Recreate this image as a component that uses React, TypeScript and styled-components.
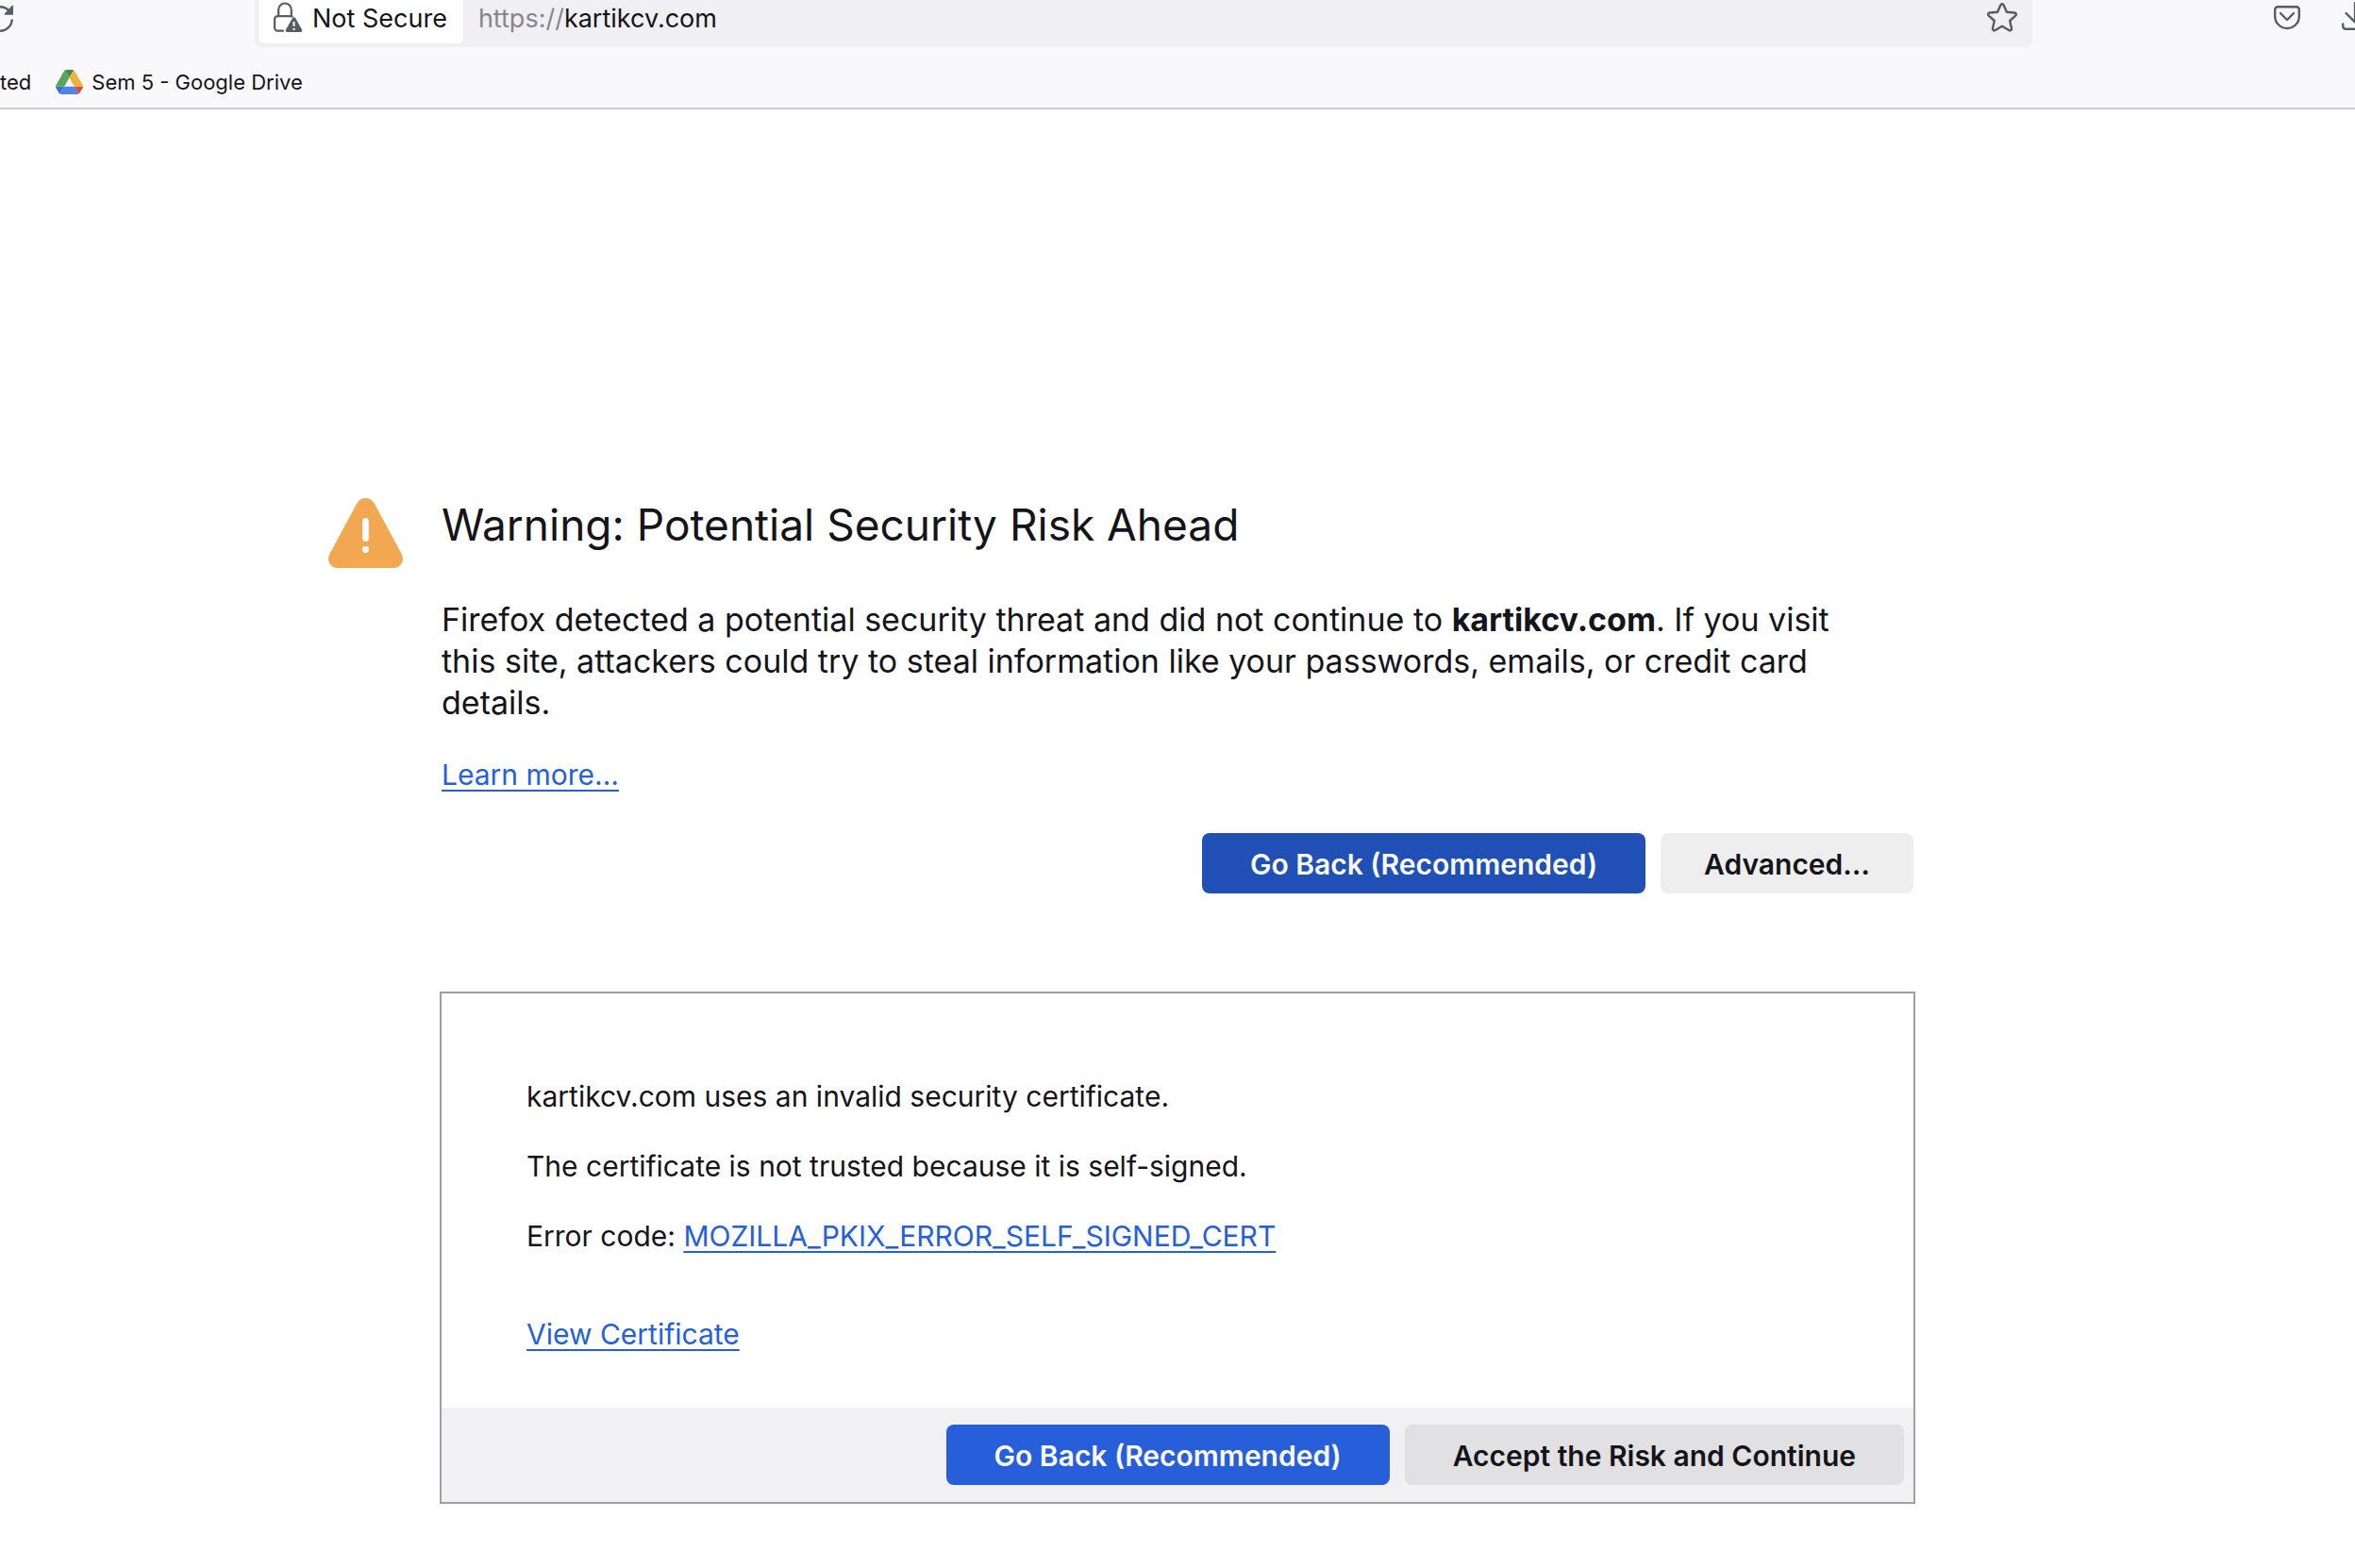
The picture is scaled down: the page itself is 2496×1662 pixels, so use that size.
import React from "react";
import styled, { createGlobalStyle } from "styled-components";

const GlobalStyle = createGlobalStyle`
  *, *::before, *::after { box-sizing: border-box; }
  body {
    margin: 0;
    background: #ffffff;
    color: #15141a;
    font-family: Inter, "Noto Sans", "Liberation Sans", sans-serif;
  }
  button, input { font: inherit; color: inherit; }
`;

const Chrome = styled.header`
  background: #f9f9fb;
  border-bottom: 2px solid #cccccc;
  overflow: hidden;
`;

const Toolbar = styled.div`
  display: flex;
  align-items: flex-start;
  height: 50px;
`;

const ToolButton = styled.button`
  display: flex;
  flex: none;
  padding: 0;
  border: 0;
  background: none;
  color: #5b5b66;
  cursor: pointer;
`;

const NavGroup = styled.div`
  flex: none;
  width: 270px;
`;

const ActionGroup = styled.div`
  display: flex;
  flex: none;
  gap: 44px;
  padding-left: 256px;
`;

const UrlBar = styled.div`
  display: flex;
  align-items: flex-start;
  flex: 1;
  min-width: 0;
  height: 50px;
  padding: 0 16px 0 4px;
  border-radius: 0 0 8px 8px;
  background: #f0f0f4;
  font-size: 27px;
  line-height: 40px;
`;

const Identity = styled.button`
  display: flex;
  align-items: flex-start;
  flex: none;
  gap: 10px;
  height: 46px;
  padding: 0 17px 0 16px;
  border: 0;
  border-radius: 0 0 6px 6px;
  background: #ffffff;
  white-space: nowrap;
  cursor: pointer;
`;

const Address = styled.label`
  display: flex;
  flex: 1;
  min-width: 0;
  padding-left: 16px;
`;

const Scheme = styled.span`
  color: #87878b;
`;

const AddressInput = styled.input`
  flex: 1;
  min-width: 0;
  height: 40px;
  padding: 0;
  border: 0;
  outline: 0;
  background: transparent;
`;

const Bookmarks = styled.nav`
  display: flex;
  align-items: center;
  gap: 26px;
  height: 64px;
  padding-top: 10px;
  font-size: 22px;
  line-height: 28px;
`;

const Bookmark = styled.a`
  display: flex;
  align-items: center;
  gap: 9px;
  color: inherit;
  text-decoration: none;
  white-space: nowrap;
`;

const Page = styled.main`
  display: grid;
  grid-template-columns: 1fr minmax(0, 1564px) 1fr;
  align-items: start;
  padding: 411px 0 68px;
`;

const IconCell = styled.div`
  display: flex;
  justify-content: flex-end;
  padding-right: 39px;
`;

const Summary = styled.section`
  display: flex;
  flex-direction: column;
  align-items: flex-start;
  padding: 0 2px;
`;

const Title = styled.h1`
  margin: 0 0 50px;
  font-size: 46px;
  font-weight: 400;
  line-height: 58px;
`;

const Lead = styled.p`
  max-width: 1520px;
  margin: 0 0 34px;
  font-size: 34px;
  line-height: 44px;
`;

const Link = styled.a`
  color: #2560dc;
  font-size: 30px;
  line-height: 40px;
  text-decoration: underline;
  text-decoration-thickness: 2px;
  text-decoration-skip-ink: none;
  text-underline-offset: 5px;
`;

const Actions = styled.div`
  display: flex;
  justify-content: flex-end;
  align-self: stretch;
  gap: 16px;
  margin-top: 42px;
`;

const tones = {
  pressed: "#204fb5",
  primary: "#275fdb",
  light: "#eeeeee",
  neutral: "#e1e1e4",
};

const Button = styled.button<{ $tone: keyof typeof tones; $narrow?: boolean }>`
  height: 64px;
  padding: 2px ${(p) => (p.$narrow ? 46 : 51)}px 0;
  border: 0;
  border-radius: 8px;
  background: ${(p) => tones[p.$tone]};
  color: ${(p) => (p.$tone === "pressed" || p.$tone === "primary" ? "#fbfbfe" : "#15141a")};
  font-size: 30px;
  font-weight: 600;
  line-height: 40px;
  white-space: nowrap;
  cursor: pointer;
`;

const Panel = styled.section`
  margin-top: 104px;
  border: 2px solid #9f9fa1;
`;

const PanelBody = styled.div`
  display: flex;
  flex-direction: column;
  align-items: flex-start;
  gap: 34px;
  padding: 89px 90px 58px;
  font-size: 30px;
  line-height: 40px;
`;

const Detail = styled.p`
  margin: 0;
`;

const CertificateRow = styled.p`
  margin: 30px 0 0;
`;

const PanelFooter = styled.footer`
  display: flex;
  justify-content: flex-end;
  gap: 16px;
  padding: 18px 10px;
  background: #f1f1f3;
`;

const ReloadIcon = () => (
  <svg width="16" height="38" viewBox="0 0 16 38" fill="none" aria-hidden="true">
    <path d="M12.8 20.5A12.8 12.8 0 0 1 0 32.8M0 7.2c4 0 7.4 1.7 9.8 4.6" stroke="currentColor" strokeWidth="2.4" />
    <path d="M14 6.2V15.8H5.400c-.8 0-1.100-.8-.6-1.300l7.900-8.500c.5-.5 1.300-.4 1.300.2z" fill="currentColor" />
  </svg>
);

const LockWarningIcon = () => (
  <svg width="31" height="38" viewBox="0 0 31 38" fill="none" aria-hidden="true">
    <g stroke="#5b5b66" strokeWidth="2.2">
      <path d="M5.2 17V10.3a6.8 6.8 0 0 1 13.6 0V17" />
      <path d="M20 18.5c-.2-1-1-1.400-2-1.400H4.200a3.100 3.100 0 0 0-3.100 3.100v9.300a3.100 3.100 0 0 0 3.100 3.100h6.600" />
    </g>
    <path d="M20 19.300c.7-1.400 2.500-1.400 3.200 0l6.900 12.300c.6 1.200-.1 2.400-1.500 2.400H14.400c-1.400 0-2.200-1.200-1.500-2.400z" fill="#5b5b66" />
    <path d="M21.500 23v4.800M21.500 30v2" stroke="#fff" strokeWidth="2" />
  </svg>
);

const StarIcon = () => (
  <svg width="32" height="38" viewBox="0 0 32 38" fill="none" stroke="#5b5b5f" strokeWidth="2.4" strokeLinejoin="round" aria-hidden="true">
    <path d="M14.300 5.400c.7-1.500 2.700-1.500 3.400 0l3.200 7.400 8.100.7c1.800.2 2.500 2 1.200 3.200L24.200 22l1.800 8c.4 1.700-1.300 2.900-2.800 2L16 27.800 8.800 32c-1.500.9-3.200-.3-2.800-2l1.800-8-6-5.300c-1.300-1.200-.6-3 1.200-3.200l8.100-.7z" />
  </svg>
);

const PocketIcon = () => (
  <svg width="28" height="38" viewBox="0 0 28 38" fill="none" stroke="currentColor" strokeWidth="2.4" strokeLinecap="round" strokeLinejoin="round" aria-hidden="true">
    <path d="M4.200 7.200h19.600a3 3 0 0 1 3 3v7a12.800 12.800 0 0 1-25.600 0v-7a3 3 0 0 1 3-3z" />
    <path d="M7 14l7 7 7-7" />
  </svg>
);

const DownloadIcon = () => (
  <svg width="14" height="38" viewBox="0 0 14 38" fill="none" stroke="currentColor" strokeWidth="2.4" strokeLinecap="round" aria-hidden="true">
    <path d="M14 3v20M4.500 14l9.500 9.500M1.200 25.500v2.300a3 3 0 0 0 3 3H16" />
  </svg>
);

const DriveIcon = () => (
  <svg width="29" height="26" viewBox="0 0 87.3 78" aria-hidden="true">
    <path fill="#3d6fd0" d="M6.600 66.850l3.850 6.650c.8 1.400 1.950 2.500 3.300 3.300L27.500 53H0c0 1.550.4 3.100 1.200 4.500z" />
    <path fill="#58a55c" d="M43.650 25L29.900 1.200c-1.350.8-2.500 1.900-3.300 3.300l-25.400 44A9.060 9.060 0 0 0 0 53h27.500z" />
    <path fill="#dd4b3a" d="M73.550 76.800c1.350-.8 2.500-1.900 3.300-3.300l1.600-2.750 7.650-13.250c.8-1.400 1.200-2.950 1.200-4.500H59.798l5.852 11.500z" />
    <path fill="#438c47" d="M43.650 25L57.400 1.200C56.050.4 54.500 0 52.900 0H34.400c-1.600 0-3.150.45-4.500 1.200z" />
    <path fill="#5083ed" d="M59.800 53H27.500L13.750 76.800c1.350.8 2.900 1.200 4.500 1.200h50.800c1.600 0 3.150-.45 4.500-1.200z" />
    <path fill="#f1b03c" d="M73.400 26.500l-12.700-22c-.8-1.400-1.950-2.500-3.300-3.300L43.650 25 59.800 53h27.450c0-1.550-.4-3.100-1.200-4.500z" />
  </svg>
);

const WarningIcon = () => (
  <svg width="79" height="75" viewBox="0 0 79 75" role="img" aria-label="Warning">
    <path fill="#f2a850" d="M30.300 6.600C32.200 3 35.500 1 39.500 1s7.300 2 9.200 5.600l29 53.700C81.200 67.300 76.700 75 69 75H10C2.300 75-2.200 67.300 1.300 60.300z" />
    <rect x="36.200" y="22" width="6.600" height="25" rx="3.300" fill="#fff" />
    <rect x="36.200" y="52" width="6.600" height="7" rx="2.400" fill="#fff" />
  </svg>
);

export default function App() {
  return (
    <>
      <GlobalStyle />
      <Chrome>
        <Toolbar>
          <NavGroup>
            <ToolButton type="button" aria-label="Reload">
              <ReloadIcon />
            </ToolButton>
          </NavGroup>
          <UrlBar>
            <Identity type="button">
              <LockWarningIcon />
              Not Secure
            </Identity>
            <Address>
              <Scheme>https://</Scheme>
              <AddressInput type="text" aria-label="Address" defaultValue="kartikcv.com" />
            </Address>
            <ToolButton type="button" aria-label="Bookmark this page">
              <StarIcon />
            </ToolButton>
          </UrlBar>
          <ActionGroup>
            <ToolButton type="button" aria-label="Save to Pocket">
              <PocketIcon />
            </ToolButton>
            <ToolButton type="button" aria-label="Downloads">
              <DownloadIcon />
            </ToolButton>
          </ActionGroup>
        </Toolbar>
        <Bookmarks aria-label="Bookmarks">
          <Bookmark href="#started">ted</Bookmark>
          <Bookmark href="#drive">
            <DriveIcon />
            Sem 5 - Google Drive
          </Bookmark>
        </Bookmarks>
      </Chrome>
      <Page>
        <IconCell>
          <WarningIcon />
        </IconCell>
        <div>
          <Summary>
            <Title>Warning: Potential Security Risk Ahead</Title>
            <Lead>
              Firefox detected a potential security threat and did not continue to <b>kartikcv.com</b>. If you
              visit this site, attackers could try to steal information like your passwords, emails, or credit
              card details.
            </Lead>
            <Link href="#learn-more">Learn more…</Link>
            <Actions>
              <Button type="button" $tone="pressed">Go Back (Recommended)</Button>
              <Button type="button" $tone="light" $narrow>Advanced…</Button>
            </Actions>
          </Summary>
          <Panel>
            <PanelBody>
              <Detail>kartikcv.com uses an invalid security certificate.</Detail>
              <Detail>The certificate is not trusted because it is self-signed.</Detail>
              <Detail>
                Error code: <Link href="#error-code">MOZILLA_PKIX_ERROR_SELF_SIGNED_CERT</Link>
              </Detail>
              <CertificateRow>
                <Link href="#certificate">View Certificate</Link>
              </CertificateRow>
            </PanelBody>
            <PanelFooter>
              <Button type="button" $tone="primary">Go Back (Recommended)</Button>
              <Button type="button" $tone="neutral">Accept the Risk and Continue</Button>
            </PanelFooter>
          </Panel>
        </div>
      </Page>
    </>
  );
}
